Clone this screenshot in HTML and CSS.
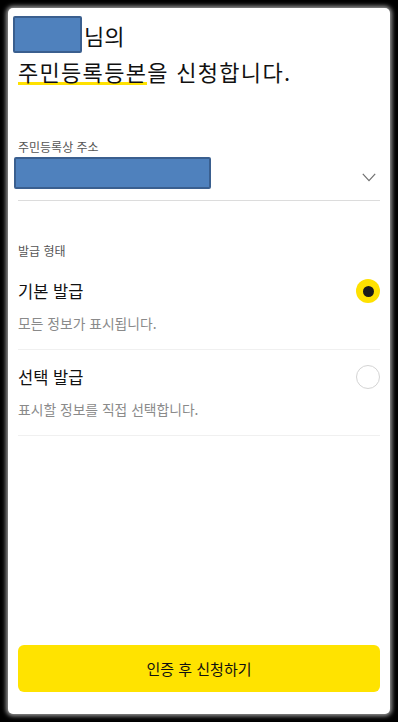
FILE: index.html
```html
<!DOCTYPE html>
<html lang="ko">
<head>
<meta charset="utf-8">
<link rel="stylesheet" href="styles.css">
</head>
<body>
<div class="card">
  <div class="heading">
    <div class="line1"><span class="redact name"></span><span>님의</span></div>
    <div class="line2"><span class="hl">주민등록등본</span>을 신청합니다.</div>
  </div>
  <div class="addr">
    <div class="label">주민등록상 주소</div>
    <div class="addr-row">
      <span class="redact addr-box"></span>
      <svg class="chev" width="14" height="9" viewBox="0 0 14 9"><path d="M0.8 0.8 L7 7.6 L13.2 0.8" fill="none" stroke="#707070" stroke-width="1.2"/></svg>
    </div>
  </div>
  <div class="label type-label">발급 형태</div>
  <div class="option">
    <div class="opt-row">
      <span class="opt-title">기본 발급</span>
      <span class="radio on"><span class="dot"></span></span>
    </div>
    <div class="opt-desc">모든 정보가 표시됩니다.</div>
  </div>
  <div class="option">
    <div class="opt-row">
      <span class="opt-title">선택 발급</span>
      <span class="radio"></span>
    </div>
    <div class="opt-desc">표시할 정보를 직접 선택합니다.</div>
  </div>
  <button class="cta">인증 후 신청하기</button>
</div>
</body>
</html>
```
FILE: styles.css
```css
html, body {
  margin: 0;
  padding: 0;
  background: #000;
}
body {
  width: 398px;
  height: 722px;
  padding: 8px;
  box-sizing: border-box;
  font-family: "Noto Sans CJK KR", "Noto Sans", sans-serif;
  color: #111;
}
.card {
  width: 382px;
  height: 706px;
  background: #fff;
  border-radius: 5px;
  box-shadow: 0 0 4px 2px #9a9a9a;
  padding: 8px 10px 22px 10px;
  box-sizing: border-box;
  display: flex;
  flex-direction: column;
}
.redact {
  display: inline-block;
  background: #4f81bd;
  border: 2px solid #3a5f8f;
  box-sizing: border-box;
  border-radius: 2px;
}
.heading {
  font-size: 22px;
  color: #111;
}
.line1 {
  height: 37px;
  display: flex;
  align-items: center;
}
.name {
  width: 69px;
  height: 37px;
  margin-left: -5px;
  margin-right: 2px;
}
.line2 {
  line-height: 37px;
  letter-spacing: 1.3px;
}
.hl {
  background-image: linear-gradient(#ffe100, #ffe100);
  background-repeat: no-repeat;
  background-size: 100% 3px;
  background-position: 0 calc(100% - 2px);
}
.addr {
  margin-top: 48px;
  border-bottom: 1px solid #dcdcdc;
  padding-bottom: 11px;
}
.label {
  font-size: 12px;
  line-height: 18px;
  color: #555;
}
.addr-row {
  display: flex;
  justify-content: space-between;
  margin-top: 1px;
}
.addr-box {
  width: 197px;
  height: 32px;
  margin-left: -4px;
}
.chev {
  margin-top: 16px;
  margin-right: 4px;
}
.type-label {
  margin-top: 41px;
}
.option {
  padding: 15px 0 16px 0;
  border-bottom: 1px solid #f0f0f0;
}
.type-label + .option {
  padding-top: 19px;
}
.opt-row {
  height: 24px;
  display: flex;
  align-items: center;
  justify-content: space-between;
}
.opt-title {
  font-size: 16.5px;
  color: #111;
}
.opt-desc {
  margin-top: 10px;
  font-size: 13.8px;
  line-height: 20px;
  color: #8a8a8a;
}
.radio {
  width: 24px;
  height: 24px;
  border-radius: 50%;
  box-sizing: border-box;
  border: 1.5px solid #d4d4d4;
  display: flex;
  align-items: center;
  justify-content: center;
}
.radio.on {
  background: #ffe100;
  border: none;
}
.dot {
  width: 11px;
  height: 11px;
  border-radius: 50%;
  background: #1a1a1a;
}
.cta {
  margin-top: auto;
  height: 47px;
  width: 100%;
  border: none;
  border-radius: 6px;
  background: #ffe300;
  font-family: inherit;
  font-size: 15px;
  color: #111;
}
```
